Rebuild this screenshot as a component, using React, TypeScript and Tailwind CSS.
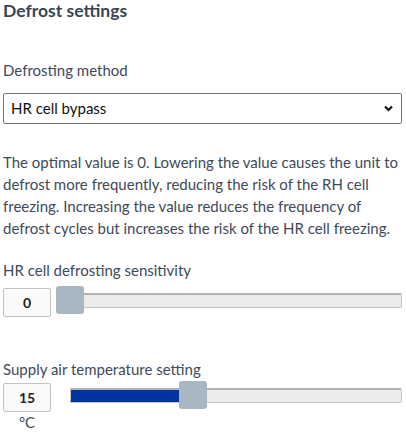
import React from 'react';

type SliderRowProps = {
  value: number;
  pct: number;
  unit?: string;
};

function SliderRow({ value, pct, unit }: SliderRowProps) {
  return (
    <div className="flex items-start">
      <div className="flex w-[48px] shrink-0 flex-col items-center">
        <div className="mt-[2px] flex h-[29px] w-[48px] items-center justify-center rounded-[2px] border border-[#c2c2c2] bg-[#fafafa] text-[14px] font-bold text-[#222]">
          {value}
        </div>
        {unit && <span className="text-[15px] leading-[20px] text-[#3e4a5b]">{unit}</span>}
      </div>
      {/* Slider */}
      <div className="relative ml-[19px] h-[28px] flex-1">
        <div className="absolute inset-x-0 top-[7px] h-[15px] overflow-hidden rounded-r-[2px] border border-t-2 border-[#c4c4c4] border-t-[#b3b3b3] bg-[#ececec]">
          <div className="h-full bg-[#0033a0]" style={{ width: `${pct}%` }} />
        </div>
        <div
          className="absolute top-0 h-[28px] w-[28px] rounded-[3px] bg-[#a7b8c3]"
          style={{ left: `calc(${pct}% - 14px)` }}
        />
      </div>
    </div>
  );
}

export default function App() {
  return (
    <div className="h-[432px] w-[406px] overflow-hidden bg-white pl-[3px] pr-[4px] font-['Lato',sans-serif] text-[#3e4a5b]">
      <h2 className="text-[17.5px] font-bold leading-[22px] text-[#3a4556]">Defrost settings</h2>

      <label className="mt-[37px] block text-[15px] leading-[22px]">Defrosting method</label>

      <div className="relative mt-[12px]">
        <select
          defaultValue="bypass"
          className="block h-[31px] w-full appearance-none rounded-[2px] border border-[#767676] bg-white pl-[7px] text-[15px] text-[#111] outline-none"
        >
          <option value="bypass">HR cell bypass</option>
        </select>
        <svg
          className="pointer-events-none absolute right-[9px] top-[12px]"
          width="9"
          height="7"
          viewBox="0 0 9 7"
        >
          <path d="M1 1.5 L4.5 5 L8 1.5" fill="none" stroke="#111" strokeWidth="2.2" />
        </svg>
      </div>

      <p className="mt-[27px] text-[15px] leading-[22px]">
        The optimal value is 0. Lowering the value causes the unit to
        <br />
        defrost more frequently, reducing the risk of the RH cell
        <br />
        freezing. Increasing the value reduces the frequency of
        <br />
        defrost cycles but increases the risk of the HR cell freezing.
      </p>

      <label className="mt-[20px] block text-[15px] leading-[22px]">HR cell defrosting sensitivity</label>
      <div className="mt-[5px]">
        <SliderRow value={0} pct={0} />
      </div>

      <label className="mt-[41px] block text-[15px] leading-[22px]">Supply air temperature setting</label>
      <div className="mt-[1px]">
        <SliderRow value={15} pct={37} unit="°C" />
      </div>
    </div>
  );
}
